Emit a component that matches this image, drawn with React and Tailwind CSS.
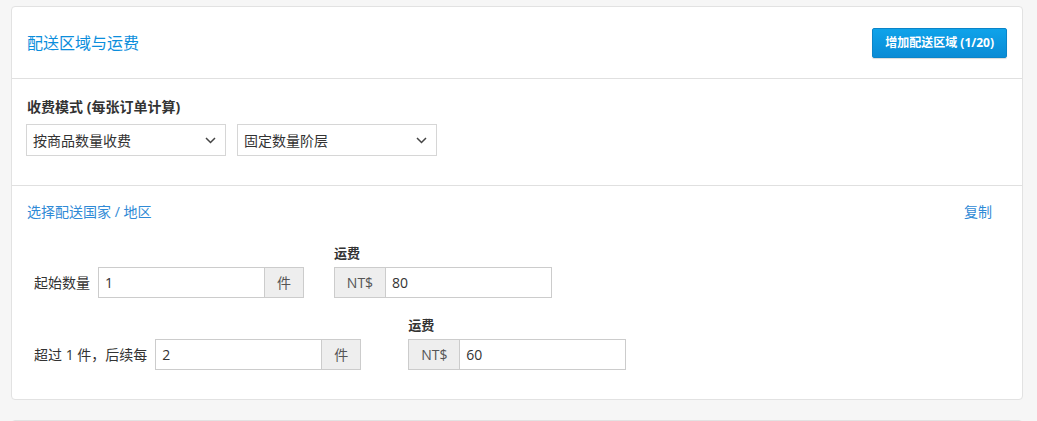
// App.jsx
import React from "react";

const FONT = { fontFamily: '"Open Sans", "Noto Sans CJK SC", sans-serif' };

function Chevron() {
  return (
    <svg width="11" height="7" viewBox="0 0 11 7" fill="none">
      <path d="M1 1l4.5 4.5L10 1" stroke="#444" strokeWidth="1.5" />
    </svg>
  );
}

function Select({ label }) {
  return (
    <div className="w-[200px] h-[32px] border border-[#d6d6d6] bg-white flex items-center justify-between pl-[6px] pr-[9px] text-[14px] text-[#333]">
      <span>{label}</span>
      <Chevron />
    </div>
  );
}

function InputGroup({ value, addon, addonLeft, width, addonWidth }) {
  const addonEl = (
    <div
      className={`h-full bg-[#eeeeee] text-[#555] flex items-center justify-center text-[14px] ${
        addonLeft ? "border-r border-[#ccc]" : "border-l border-[#ccc]"
      }`}
      style={{ width: addonWidth }}
    >
      {addon}
    </div>
  );
  return (
    <div className="h-[31px] border border-[#ccc] flex bg-white" style={{ width }}>
      {addonLeft && addonEl}
      <div className="flex-1 flex items-center px-[6px] text-[14px] text-[#333]">{value}</div>
      {!addonLeft && addonEl}
    </div>
  );
}

function FeeRow({ label, value, fee, gap, labelGap }) {
  return (
    <div className="flex items-end pl-[7px]">
      <div className="flex items-center" style={{ gap: labelGap }}>
        <span className="text-[14px] text-[#333]">{label}</span>
        <InputGroup value={value} addon="件" width={206} addonWidth={39} />
      </div>
      <div className="flex flex-col" style={{ marginLeft: gap }}>
        <span className="text-[13px] font-bold text-[#333] leading-[20px] mb-[4px]">运费</span>
        <InputGroup value={fee} addon="NT$" addonLeft width={218} addonWidth={51} />
      </div>
    </div>
  );
}

export default function App() {
  return (
    <div className="h-[421px] bg-[#f6f6f6] pt-[6px] pl-[11px] pr-[14px] overflow-hidden" style={FONT}>
      <div className="bg-white border border-[#e2e2e2] rounded-[4px]">
        <div className="h-[72px] flex items-center justify-between px-[15px] border-b border-[#e0e0e0]">
          <h2 className="text-[16px] text-[#0b8edc]">配送区域与运费</h2>
          <button className="h-[30px] px-[12px] rounded-[2px] border border-[#0a84c8] bg-gradient-to-b from-[#0fa3ea] to-[#0a8bd5] text-white text-[12px] font-bold shadow-[0_1px_1px_rgba(0,0,0,0.15)]">
            增加配送区域 (1/20)
          </button>
        </div>

        <div className="px-[15px] pt-[18px] pb-[29px] border-b border-[#e0e0e0]">
          <div className="text-[14px] font-bold text-[#333] leading-[20px] mb-[7px]">收费模式 (每张订单计算)</div>
          <div className="flex gap-[11px] -ml-px">
            <Select label="按商品数量收费" />
            <Select label="固定数量阶层" />
          </div>
        </div>

        <div className="px-[15px] pt-[16px] pb-[29px]">
          <div className="flex items-center justify-between leading-[20px] text-[14px] text-[#2f8ad6] pr-[15px]">
            <span>选择配送国家 / 地区</span>
            <span>复制</span>
          </div>
          <div className="mt-[21px]">
            <FeeRow label="起始数量" value="1" fee="80" gap={30} labelGap={8} />
          </div>
          <div className="mt-[17px]">
            <FeeRow label="超过 1 件，后续每" value="2" fee="60" gap={47} labelGap={8} />
          </div>
        </div>
      </div>
      <div className="mt-[20px] h-[40px] bg-white border border-[#e2e2e2] rounded-[4px]" />
    </div>
  );
}
